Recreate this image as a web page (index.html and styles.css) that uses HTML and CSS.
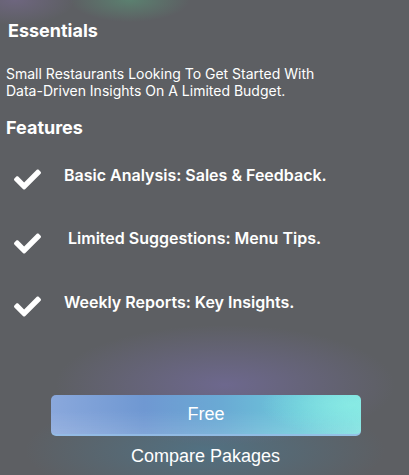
FILE: index.html
```html
<!DOCTYPE html>
<html lang="en">
<head>
<meta charset="utf-8">
<title>Essentials</title>
<link rel="stylesheet" href="styles.css">
</head>
<body>
<div class="page">
  <section class="plan">
    <h1 class="plan-title">Essentials</h1>
    <p class="plan-desc">Small Restaurants Looking To Get Started With Data-Driven Insights On A Limited Budget.</p>
    <h2 class="features-title">Features</h2>
    <ul class="features">
      <li class="feature">
        <svg class="check" viewBox="0 0 512 512" aria-hidden="true"><path d="M173.9 439.4l-166.4-166.4c-10-10-10-26.2 0-36.2l36.2-36.2c10-10 26.2-10 36.2 0L192 312.7 432.1 72.6c10-10 26.2-10 36.2 0l36.2 36.2c10 10 10 26.2 0 36.2L210.1 439.4c-10 10-26.2 10-36.2 0z"/></svg>
        <span class="feature-text">Basic Analysis: Sales &amp; Feedback.</span>
      </li>
      <li class="feature">
        <svg class="check" viewBox="0 0 512 512" aria-hidden="true"><path d="M173.9 439.4l-166.4-166.4c-10-10-10-26.2 0-36.2l36.2-36.2c10-10 26.2-10 36.2 0L192 312.7 432.1 72.6c10-10 26.2-10 36.2 0l36.2 36.2c10 10 10 26.2 0 36.2L210.1 439.4c-10 10-26.2 10-36.2 0z"/></svg>
        <span class="feature-text feature-text--indent">Limited Suggestions: Menu Tips.</span>
      </li>
      <li class="feature">
        <svg class="check" viewBox="0 0 512 512" aria-hidden="true"><path d="M173.9 439.4l-166.4-166.4c-10-10-10-26.2 0-36.2l36.2-36.2c10-10 26.2-10 36.2 0L192 312.7 432.1 72.6c10-10 26.2-10 36.2 0l36.2 36.2c10 10 10 26.2 0 36.2L210.1 439.4c-10 10-26.2 10-36.2 0z"/></svg>
        <span class="feature-text">Weekly Reports: Key Insights.</span>
      </li>
    </ul>
  </section>
  <div class="actions">
    <button class="btn-free" type="button">Free</button>
    <a class="compare" href="#">Compare Pakages</a>
  </div>
</div>
</body>
</html>
```

FILE: styles.css
```css
html, body {
  margin: 0;
  padding: 0;
  height: 100%;
}
body {
  background-color: #5d5f63;
  background-image:
    radial-gradient(ellipse 60px 22px at 130px 0px, rgba(90, 150, 120, 0.6), rgba(90, 150, 120, 0) 100%),
    radial-gradient(ellipse 60px 25px at 15px 0px, rgba(130, 110, 160, 0.45), rgba(130, 110, 160, 0) 100%),
    radial-gradient(ellipse 170px 60px at 225px 385px, rgba(120, 110, 170, 0.6), rgba(120, 110, 170, 0) 100%),
    radial-gradient(ellipse 180px 55px at 205px 450px, rgba(70, 130, 160, 0.5), rgba(70, 130, 160, 0) 100%);
  color: #ffffff;
  font-family: Inter, "Noto Sans", sans-serif;
  overflow: hidden;
}
.page {
  height: 475px;
  display: flex;
  flex-direction: column;
  box-sizing: border-box;
}
.plan {
  padding: 20px 0 0 6px;
}
.plan-title {
  margin: 0 0 0 2px;
  font-size: 18px;
  line-height: 22px;
  font-weight: 700;
}
.plan-desc {
  margin: 23px 0 0 0;
  font-size: 14px;
  line-height: 17px;
  font-weight: 400;
  max-width: 340px;
}
.features-title {
  margin: 18px 0 0 0;
  font-size: 18px;
  line-height: 22px;
  font-weight: 700;
}
.features {
  list-style: none;
  margin: 4px 0 0 0;
  padding: 0;
  display: flex;
  flex-direction: column;
}
.feature {
  display: flex;
  align-items: center;
  height: 63.5px;
  padding-left: 8px;
}
.check {
  width: 27px;
  height: 27px;
  fill: #ffffff;
  flex: none;
  margin-top: 10px;
}
.feature-text {
  margin-left: 23px;
  font-size: 16px;
  font-weight: 600;
  line-height: 20px;
}
.feature-text--indent {
  margin-left: 27px;
}
.actions {
  margin-top: auto;
  padding-bottom: 8px;
  display: flex;
  flex-direction: column;
  align-items: center;
}
.btn-free {
  width: 310px;
  height: 41px;
  margin-left: 3px;
  border: none;
  border-radius: 5px;
  border-bottom: 2px solid rgba(150, 190, 230, 0.9);
  background:
    radial-gradient(ellipse 90px 30px at 300px 10px, rgba(140, 240, 230, 0.7), rgba(140, 240, 230, 0) 100%),
    linear-gradient(180deg, rgba(255,255,255,0) 40%, rgba(255,255,255,0.12) 100%),
    linear-gradient(90deg, #8aa8dc 0%, #6f98d2 30%, #6aaad4 55%, #6cc8da 80%, #80e0e0 100%);
  color: #ffffff;
  font-family: "Liberation Sans", Arial, sans-serif;
  font-size: 18px;
  cursor: pointer;
}
.compare {
  margin-top: 9px;
  margin-left: 2px;
  color: #ffffff;
  text-decoration: none;
  font-family: "Liberation Sans", Arial, sans-serif;
  font-size: 18px;
  line-height: 22px;
}
```
